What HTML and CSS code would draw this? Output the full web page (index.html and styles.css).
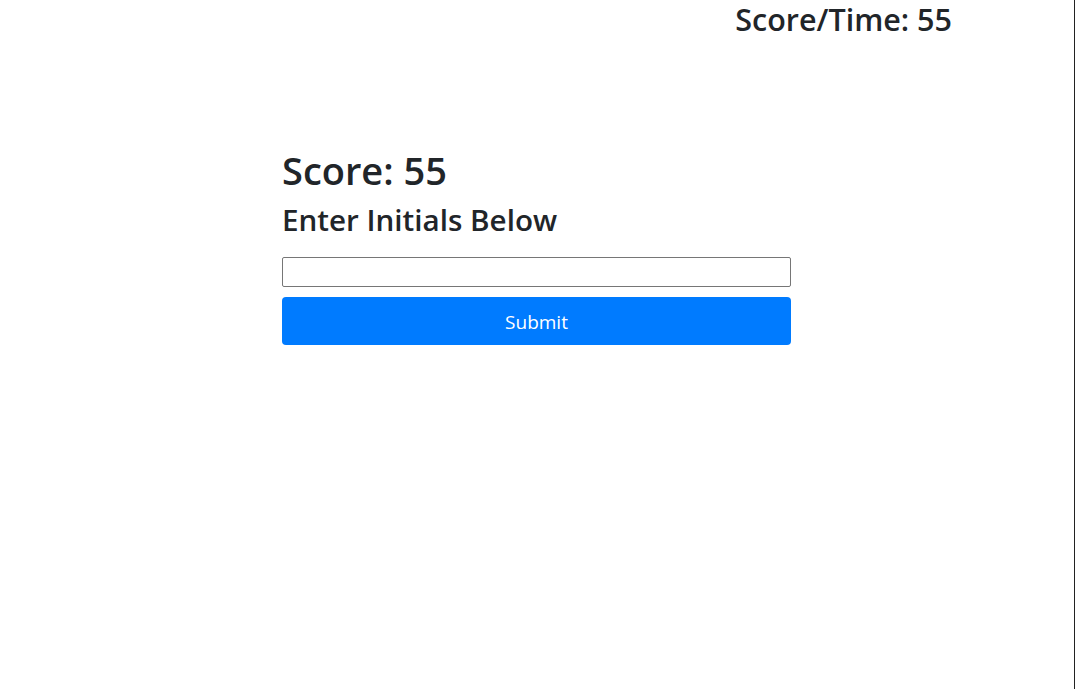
FILE: index.html
```html
<!DOCTYPE html>
<html lang="en">
<head>
<meta charset="utf-8">
<title>Quiz</title>
<link rel="stylesheet" href="styles.css">
</head>
<body>
<div class="page">
  <header class="topbar">
    <h3 class="timer">Score/Time: 55</h3>
  </header>
  <main class="panel">
    <h1 class="score">Score: 55</h1>
    <h2 class="prompt">Enter Initials Below</h2>
    <form class="initials-form">
      <input class="initials-input" type="text" aria-label="Initials">
      <button class="submit-btn" type="button">Submit</button>
    </form>
  </main>
</div>
</body>
</html>
```

FILE: styles.css
```css
* { box-sizing: border-box; }
html, body { margin: 0; padding: 0; background: #fff; }
body {
  font-family: "Open Sans", "Noto Sans", sans-serif;
  color: #212529;
}
.page {
  width: 1075px;
  min-height: 100vh;
  border-right: 1px solid #222;
}
.topbar {
  display: flex;
  justify-content: flex-end;
  padding-right: 122px;
}
.timer {
  margin: 0;
  font-size: 30.5px;
  font-weight: 600;
  line-height: 39px;
}
.panel {
  width: 509px;
  margin: 107px auto 0 282px;
}
.score {
  margin: 0;
  font-size: 38px;
  font-weight: 600;
  line-height: 48px;
}
.prompt {
  margin: 2px 0 0;
  font-size: 29.6px;
  font-weight: 600;
  line-height: 48px;
}
.initials-form {
  margin-top: 13px;
  display: flex;
  flex-direction: column;
  gap: 10px;
}
.initials-input {
  height: 30px;
  border: 1px solid #767676;
  border-radius: 2px;
  padding: 0 4px;
  font-size: 16px;
}
.submit-btn {
  height: 48px;
  border: none;
  border-radius: 4px;
  background: #007bff;
  color: #fff;
  font-family: inherit;
  font-size: 19px;
  padding-top: 3px;
}
```
